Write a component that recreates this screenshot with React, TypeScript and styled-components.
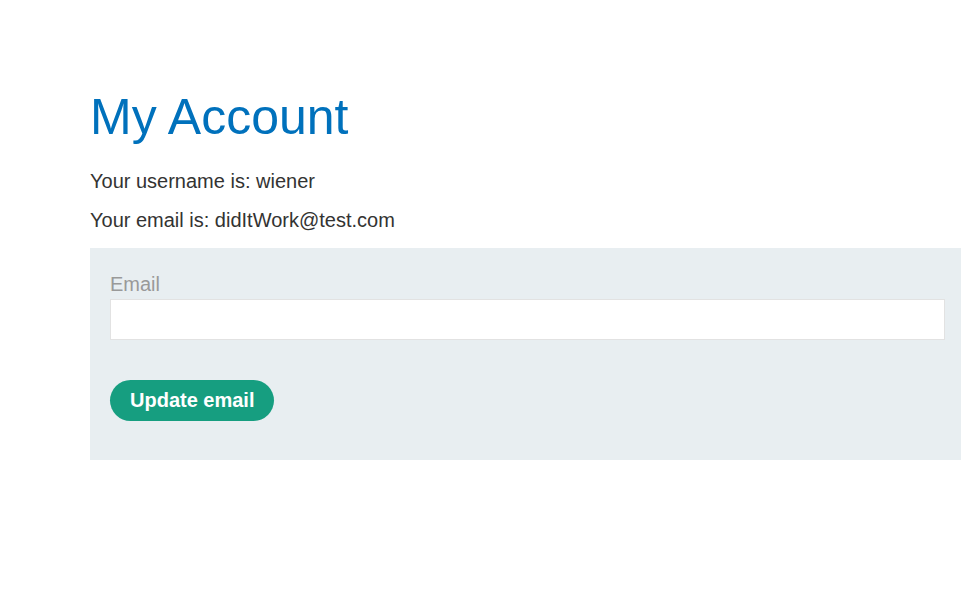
import styled, { createGlobalStyle } from 'styled-components';

const GlobalStyle = createGlobalStyle`
  html, body {
    margin: 0;
    padding: 0;
    background: #fff;
    font-family: "Liberation Sans", Arial, sans-serif;
    color: #333332;
  }
`;

const Page = styled.main`
  padding: 82px 0 0 90px;
`;

const Title = styled.h1`
  margin: 0 0 17px;
  font-size: 50px;
  font-weight: 400;
  line-height: 70px;
  color: #0071bc;
`;

const Line = styled.p`
  margin: 0 0 15px;
  font-size: 20px;
  line-height: 24px;
`;

const Panel = styled.form`
  display: flex;
  flex-direction: column;
  align-items: flex-start;
  margin-top: 16px;
  padding: 24px 16px 39px 20px;
  background: #e8eef1;
`;

const Label = styled.label`
  font-size: 20px;
  line-height: 24px;
  color: #999;
  margin-bottom: 3px;
`;

const Input = styled.input`
  box-sizing: border-box;
  width: 100%;
  height: 41px;
  margin: 0 0 40px;
  padding: 0 10px;
  border: 1px solid #e2e2e2;
  background: #fff;
  font-size: 16px;
  outline: none;
`;

const Button = styled.button`
  height: 41px;
  padding: 0 20px;
  border: none;
  border-radius: 21px;
  background: #169e80;
  color: #fff;
  font-family: "Liberation Sans", Arial, sans-serif;
  font-size: 20px;
  font-weight: 700;
  cursor: pointer;
`;

export default function App() {
  return (
    <>
      <GlobalStyle />
      <Page>
        <Title>My Account</Title>
        <Line>Your username is: wiener</Line>
        <Line>Your email is: didItWork@test.com</Line>
        <Panel onSubmit={(e) => e.preventDefault()}>
          <Label htmlFor="email">Email</Label>
          <Input id="email" type="email" name="email" />
          <Button type="submit">Update email</Button>
        </Panel>
      </Page>
    </>
  );
}
